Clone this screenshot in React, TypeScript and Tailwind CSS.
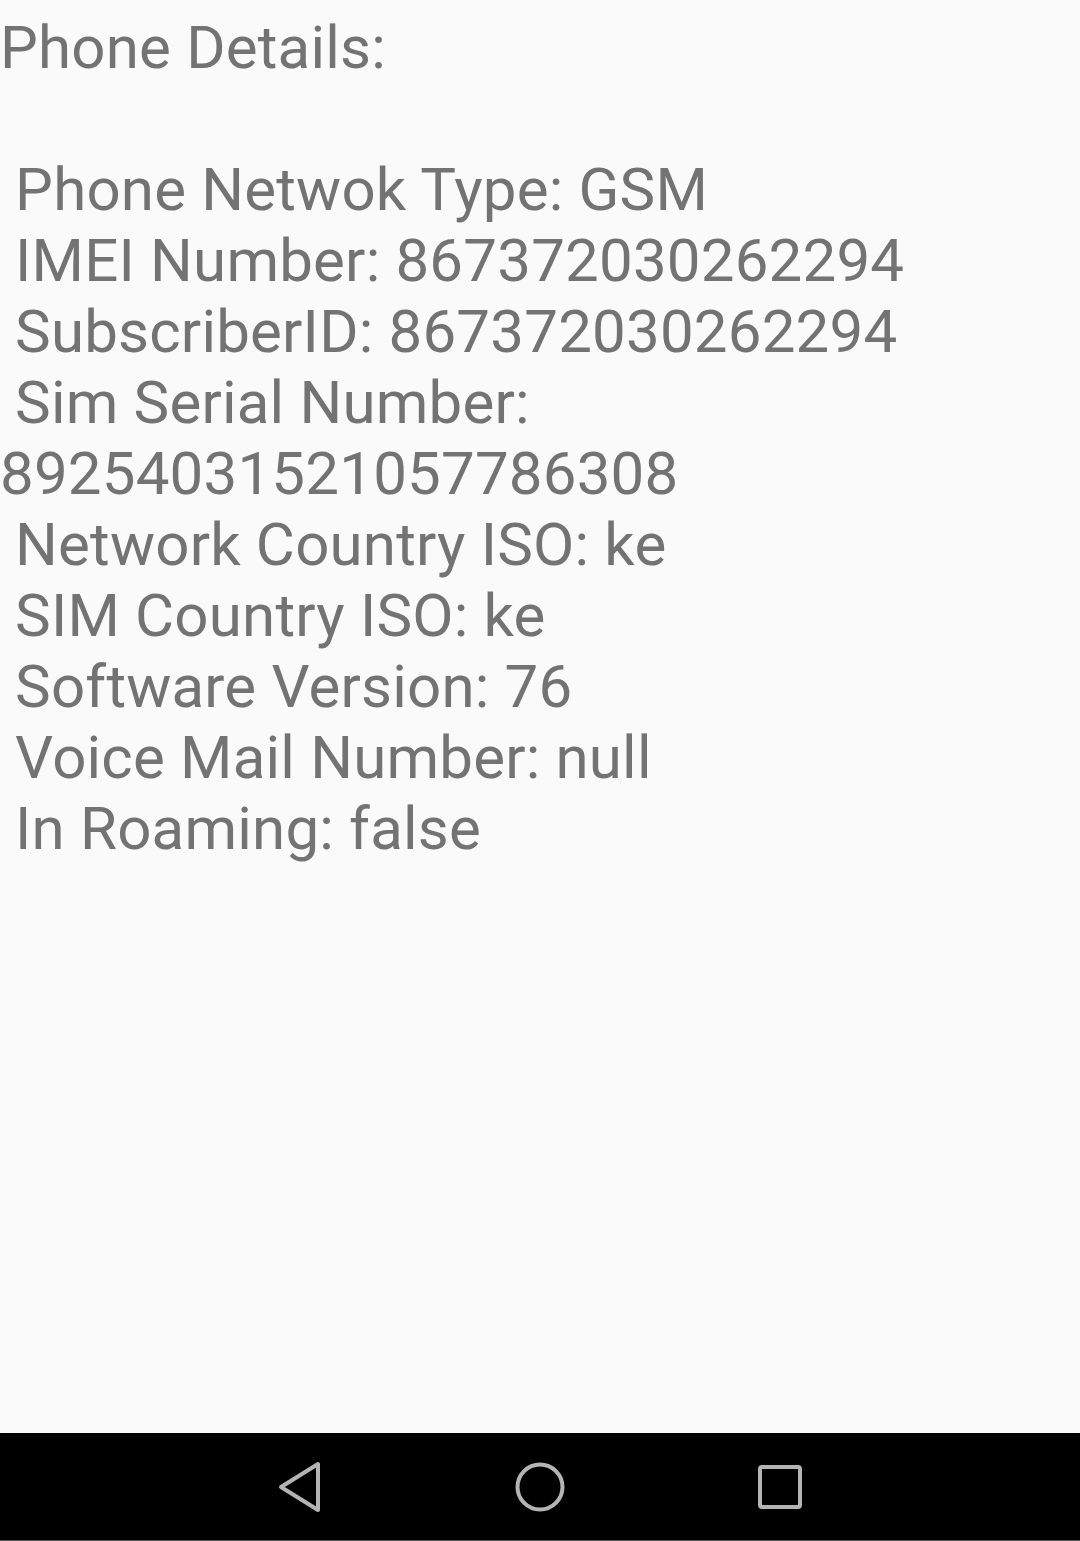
const details = [
  "Phone Details:",
  "",
  " Phone Netwok Type: GSM",
  " IMEI Number: 867372030262294",
  " SubscriberID: 867372030262294",
  " Sim Serial Number: 89254031521057786308",
  " Network Country ISO: ke",
  " SIM Country ISO: ke",
  " Software Version: 76",
  " Voice Mail Number: null",
  " In Roaming: false",
];

function NavBar() {
  return (
    <div className="h-[108px] w-full bg-black border-b border-[#5a5a5a] flex items-center justify-center gap-[190px]">
      <svg width="48" height="52" viewBox="0 0 48 52" fill="none">
        <path
          d="M42 3 L42 49 L5 26 Z"
          stroke="#b4b4b4"
          strokeWidth="4"
          strokeLinejoin="round"
        />
      </svg>
      <svg width="52" height="52" viewBox="0 0 52 52" fill="none">
        <circle cx="26" cy="26" r="22.5" stroke="#b4b4b4" strokeWidth="4" />
      </svg>
      <svg width="48" height="48" viewBox="0 0 48 48" fill="none">
        <rect
          x="4"
          y="4"
          width="40"
          height="40"
          rx="2"
          stroke="#b4b4b4"
          strokeWidth="4"
        />
      </svg>
    </div>
  );
}

export default function App() {
  return (
    <div className="w-[1080px] h-[1541px] bg-[#fafafa] flex flex-col font-['Roboto',sans-serif]">
      <div className="flex-1 pt-[12px]">
        <p className="whitespace-pre-wrap text-[60px] leading-[71px] tracking-[0.2px] text-[#737373]">
          {details.join("\n")}
        </p>
      </div>
      <NavBar />
    </div>
  );
}
